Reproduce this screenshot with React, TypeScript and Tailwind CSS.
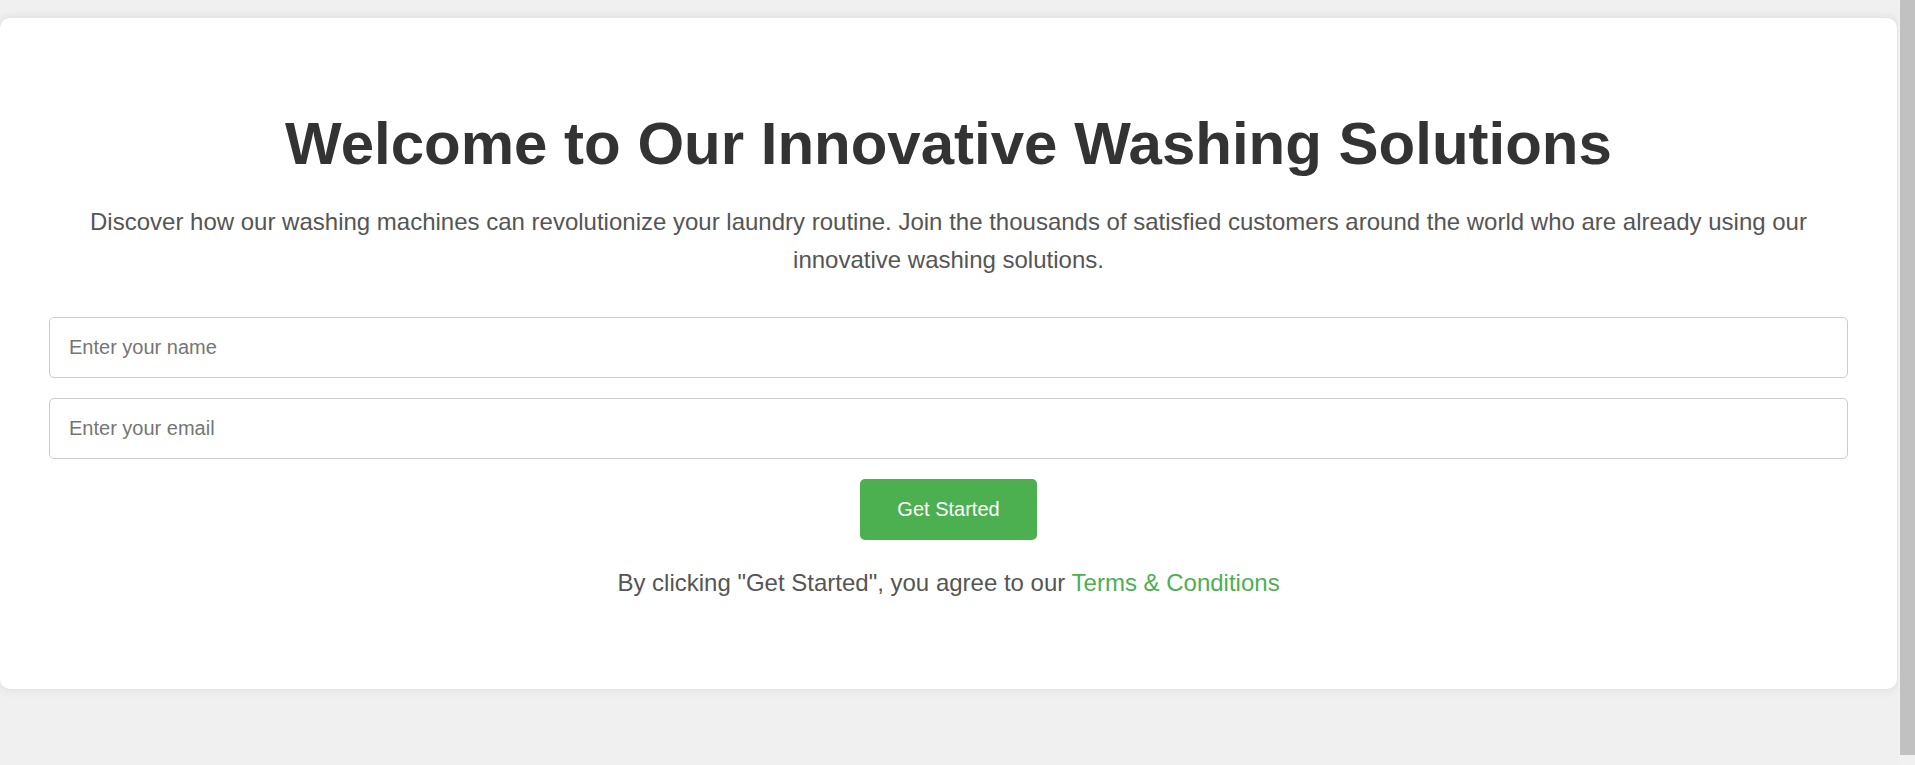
export default function App() {
  return (
    <div className="min-h-screen bg-[#f0f0f0] pt-[18px] pb-[86px] font-['Liberation_Sans',Arial,sans-serif]">
      <section className="w-[1897px] rounded-[10px] bg-white px-[49px] pt-[96px] pb-[87px] text-center shadow-[0_0_10px_rgba(0,0,0,0.1)]">
        <h1 className="text-[60px] leading-none font-bold text-[#333]">
          Welcome to Our Innovative Washing Solutions
        </h1>
        <p className="mt-[29px] text-[24px] leading-[38.4px] text-[#555]">
          Discover how our washing machines can revolutionize your laundry routine. Join the
          thousands of satisfied customers around the world who are already using our innovative
          washing solutions.
        </p>
        <form className="mt-[37px] flex flex-col items-center" onSubmit={(e) => e.preventDefault()}>
          <input
            type="text"
            placeholder="Enter your name"
            className="h-[61px] w-full rounded-[5px] border border-[#ccc] bg-white px-[19px] text-[20px] text-[#333] outline-none placeholder:text-[#757575]"
          />
          <input
            type="email"
            placeholder="Enter your email"
            className="mt-[20px] h-[61px] w-full rounded-[5px] border border-[#ccc] bg-white px-[19px] text-[20px] text-[#333] outline-none placeholder:text-[#757575]"
          />
          <button
            type="submit"
            className="mt-[20px] h-[61px] w-[177px] rounded-[5px] bg-[#4CAF50] text-[20px] text-white"
          >
            Get Started
          </button>
        </form>
        <p className="mt-[24px] text-[24px] leading-[38.4px] text-[#555]">
          By clicking "Get Started", you agree to our{" "}
          <a href="#" className="text-[#4CAF50]">
            Terms &amp; Conditions
          </a>
        </p>
      </section>

      {/* page scrollbar as seen in the screenshot */}
      <div className="fixed top-0 right-0 h-screen w-[17px] bg-[#f1f1f1] pl-[2px]">
        <div className="h-[755px] w-[15px] bg-[#c1c1c1]" />
      </div>
    </div>
  );
}
